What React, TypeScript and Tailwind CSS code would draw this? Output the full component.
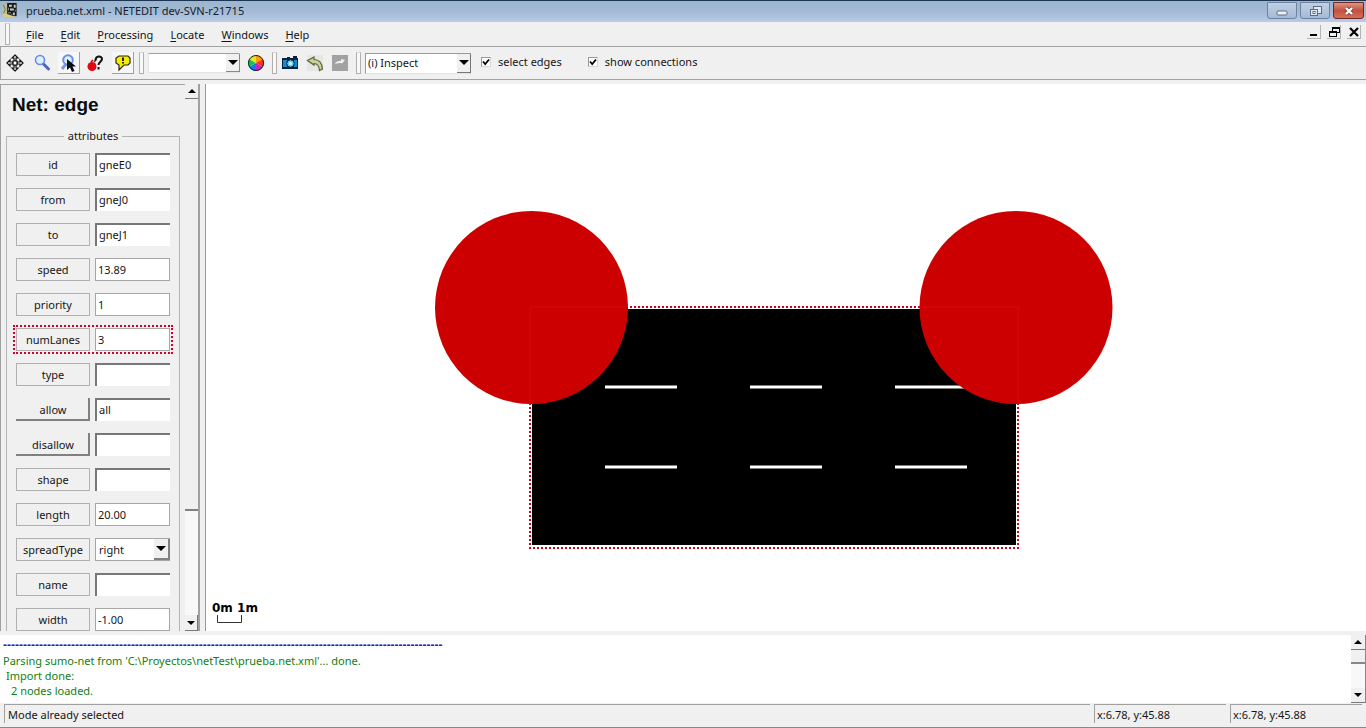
import type { ReactNode } from 'react';

const menus = ['File', 'Edit', 'Processing', 'Locate', 'Windows', 'Help'];

type FieldKind = 'sunken' | 'flat' | 'select';

interface AttributeValues {
    name: string;
    value: string;
    kind: FieldKind;
    raised?: boolean;
    highlighted?: boolean;
}

const attributes: AttributeValues[] = [
    { name: 'id', value: 'gneE0', kind: 'sunken' },
    { name: 'from', value: 'gneJ0', kind: 'sunken' },
    { name: 'to', value: 'gneJ1', kind: 'sunken' },
    { name: 'speed', value: '13.89', kind: 'flat' },
    { name: 'priority', value: '1', kind: 'flat' },
    { name: 'numLanes', value: '3', kind: 'flat', highlighted: true },
    { name: 'type', value: '', kind: 'sunken' },
    { name: 'allow', value: 'all', kind: 'sunken', raised: true },
    { name: 'disallow', value: '', kind: 'sunken', raised: true },
    { name: 'shape', value: '', kind: 'sunken' },
    { name: 'length', value: '20.00', kind: 'flat' },
    { name: 'spreadType', value: 'right', kind: 'select' },
    { name: 'name', value: '', kind: 'sunken' },
    { name: 'width', value: '-1.00', kind: 'flat' },
];

const DownArrow = () => (
    <svg viewBox="0 0 10 5" className="h-[5px] w-[10px] shrink-0">
        <path d="M0 0h10L5 5z" fill="#000" />
    </svg>
);

const SmallArrow = ({ up = false }: { up?: boolean }) => (
    <svg viewBox="0 0 8 4" className="h-1 w-2">
        <path d={up ? 'M0 4h8L4 0z' : 'M0 0h8L4 4z'} fill="#000" />
    </svg>
);

const TitleBar = () => (
    <header className="flex h-[22px] shrink-0 items-start border-t border-[#1d3550] bg-linear-to-b from-[#9cb6d0] via-[#a3bad4] to-[#b9cbe8] pr-0.5">
        <svg viewBox="0 0 18 18" className="mt-px ml-px h-[17px] w-[18px]">
            <path d="M1 2h5v12H1z" fill="#b9bda0" />
            <path d="M6 1h10v14H6z" fill="#15181c" />
            <path d="M8 3h3v2H8zM13 3h2v3h-2zM9 7h4v2H9zM7 11h3v1H7zM12 11h2v3h-2z" fill="#c9cdbf" />
            <path d="M7 6h1v3H7zM14 8h1v2h-1zM10 13h1v1h-1z" fill="#8a8f86" />
            <path d="M1 12l6 1 8 3H2z" fill="#d9cc7a" />
            <path d="M2 3l2 5-2 4" fill="none" stroke="#6f7346" />
        </svg>
        <h1 className="ml-[7px] flex-1 leading-5 text-[#14202e]">
            prueba.net.xml - NETEDIT dev-SVN-r21715
        </h1>
        <div className="mt-px flex gap-[3px]">
            <button
                aria-label="Minimize"
                className="flex h-[17px] w-[30px] items-center justify-center rounded-b-[3px] border border-[#6d83a0] bg-linear-to-b from-[#c0d0e4] to-[#a5bad6]"
            >
                <svg viewBox="0 0 12 6" className="mt-1 h-1.5 w-3">
                    <rect x="1" y="1" width="10" height="4" rx="1" fill="#eef2f7" stroke="#5d6d84" />
                </svg>
            </button>
            <button
                aria-label="Restore"
                className="flex h-[17px] w-[30px] items-center justify-center rounded-b-[3px] border border-[#6d83a0] bg-linear-to-b from-[#c0d0e4] to-[#a5bad6]"
            >
                <svg viewBox="0 0 13 12" className="h-3 w-[13px]" fill="#dfe7f1" stroke="#5d6d84">
                    <rect x="4.500" y="1.500" width="8" height="7" />
                    <rect x="1.500" y="4.500" width="7" height="6" />
                    <rect x="4" y="6.500" width="2" height="2" />
                </svg>
            </button>
            <button
                aria-label="Close"
                className="flex h-[17px] w-[31px] items-center justify-center rounded-b-[3px] border border-[#6e2a27] bg-linear-to-b from-[#dc9384] via-[#c4503e] to-[#d3705a]"
            >
                <svg viewBox="0 0 12 10" className="h-2.5 w-3">
                    <path d="M3 2l6 6M9 2l-6 6" stroke="#7b3f3a" strokeWidth="4" />
                    <path d="M3 2l6 6M9 2l-6 6" stroke="#fff" strokeWidth="2.400" />
                </svg>
            </button>
        </div>
    </header>
);

const Grip = () => (
    <span className="block h-[22px] w-[5px] border border-[#b0b0b0] border-t-[#d8d8d8] bg-[#f8f8f8]" />
);

const WindowButton = ({ label, children }: { label: string; children: ReactNode }) => (
    <button
        aria-label={label}
        className="flex h-[14px] w-[14px] items-center justify-center border-r border-b border-[#b4b4b4]"
    >
        <svg viewBox="0 0 12 12" className="h-3 w-3">
            {children}
        </svg>
    </button>
);

const MenuBar = () => (
    <nav className="flex h-[25px] shrink-0 items-center border-b border-[#a2a2a2] pr-[5px] pl-[5px]">
        <Grip />
        <ul className="ml-4 flex flex-1 gap-[17px] pt-px">
            {menus.map((menu) => (
                <li key={menu}>
                    <button>
                        <span className="underline underline-offset-2">{menu[0]}</span>
                        {menu.slice(1)}
                    </button>
                </li>
            ))}
        </ul>
        <div className="flex gap-1.5 pb-1">
            <WindowButton label="Minimize view">
                <path d="M2 8h7v2H2z" />
            </WindowButton>
            <WindowButton label="Restore view">
                <path d="M4 1h8v6H9V5H4zM5 3v2h4v1h2V3z" fillRule="evenodd" />
                <path d="M1 5h8v6H1zM2 7v3h6V7z" fillRule="evenodd" />
            </WindowButton>
            <WindowButton label="Close view">
                <path d="M2 2l8 8M10 2l-8 8" stroke="#000" strokeWidth="2.200" />
            </WindowButton>
        </div>
    </nav>
);

const ToolButton = ({
    label,
    raised = false,
    children,
}: {
    label: string;
    raised?: boolean;
    children: ReactNode;
}) => (
    <button
        aria-label={label}
        className={`flex h-[22px] w-[22px] items-center justify-center ${
            raised ? 'border-r border-b border-[#a0a0a0] bg-[#f7f7f7]' : ''
        }`}
    >
        <svg viewBox="0 0 18 18" className="h-[18px] w-[18px] shrink-0">
            {children}
        </svg>
    </button>
);

const ToolCheck = ({ label }: { label: string }) => (
    <label className="flex items-center gap-[7px] pb-0.5">
        <span className="relative flex">
            <input
                type="checkbox"
                defaultChecked
                className="h-[10px] w-[10px] appearance-none border border-[#d8d8d8] border-t-[#999] border-l-[#999] bg-white"
            />
            <svg viewBox="0 0 10 10" className="pointer-events-none absolute inset-0 h-[10px] w-[10px]">
                <path d="M2 4.500l2.200 2.500L8 2.500" fill="none" stroke="#000" strokeWidth="1.800" />
            </svg>
        </span>
        {label}
    </label>
);

const ToolBar = () => (
    <div className="flex h-[33px] shrink-0 items-center border-b border-l border-[#a2a2a2] pl-[3px]">
        <div className="flex gap-[5px]">
            <ToolButton label="Recenter view">
                <g fill="#fff" stroke="#111" strokeWidth="1.200">
                    <path d="M9 1l3 3h-2v3h-2V4H6zM9 17l3-3h-2v-3h-2v3H6zM1 9l3-3v2h3v2H4v2zM17 9l-3-3v2h-3v2h3v2z" />
                    <path d="M7 7h4v4H7z" />
                </g>
            </ToolButton>
            <ToolButton label="Zoom">
                <path d="M10.500 10l5 5" stroke="#4a66c4" strokeWidth="3" strokeLinecap="round" />
                <circle cx="7" cy="6" r="4.500" fill="#d9f0fb" stroke="#6b8be6" strokeWidth="1.600" />
            </ToolButton>
            <ToolButton label="Zoom to cursor" raised>
                <path d="M2 15l4-5" stroke="#7d98e6" strokeWidth="3" />
                <circle cx="8" cy="6" r="4.800" fill="#d9f0fb" stroke="#6b8be6" strokeWidth="2" />
                <path d="M7 5v11l3-2.500 2 4.500 2.500-1-2-4.500H16z" fill="#0a0d14" />
            </ToolButton>
            <ToolButton label="What's this">
                <circle cx="5" cy="12.500" r="4.500" fill="#e30613" />
                <path d="M4 8l2-2M7 8l2-2" stroke="#8d0c12" strokeWidth="1.500" />
                <path
                    d="M8.500 6.500c0-5 6.500-5 6.500-1.500 0 2.500-3.500 3-3.500 6M11.500 13v2.500"
                    fill="none"
                    stroke="#111"
                    strokeWidth="2"
                />
            </ToolButton>
            <ToolButton label="Tooltips" raised>
                <path
                    d="M5 2h9l2 2v5l-2 2h-4l-5 5v-5l-3-2V4z"
                    fill="#f4ed00"
                    stroke="#2a2a0a"
                    strokeWidth="1.200"
                />
                <path d="M9 3.500v3.500M9 8v1.500" stroke="#111" strokeWidth="1.800" />
            </ToolButton>
        </div>
        <span className="ml-[5px]">
            <Grip />
        </span>
        <label className="relative ml-1 flex">
            <select
                aria-label="Color scheme"
                className="h-5 w-[92px] appearance-none border border-[#e3e3e3] border-t-[#a0a0a0] bg-white px-0.5"
            >
                <option></option>
            </select>
            <span className="pointer-events-none absolute inset-y-px right-0 flex w-[14px] items-center justify-center border-r border-b border-[#888] bg-[#f0f0f0]">
                <DownArrow />
            </span>
        </label>
        <span className="ml-[5px]">
            <ToolButton label="Edit coloring">
                <path d="M9 9V1a8 8 0 0 1 7 4z" fill="#ff9d00" />
                <path d="M9 9l7-4a8 8 0 0 1 0 8z" fill="#fb3510" />
                <path d="M9 9l7 4a8 8 0 0 1-7 4z" fill="#d01ec3" />
                <path d="M9 9v8a8 8 0 0 1-7-4z" fill="#1677e8" />
                <path d="M9 9l-7 4a8 8 0 0 1 0-8z" fill="#16c34a" />
                <path d="M9 9L2 5a8 8 0 0 1 7-4z" fill="#e9e51c" />
                <circle cx="9" cy="9" r="7.500" fill="none" stroke="#222" />
            </ToolButton>
        </span>
        <span className="ml-[5px]">
            <Grip />
        </span>
        <div className="ml-0.5 flex gap-[3px]">
            <ToolButton label="Snapshot">
                <path d="M1 4h5V3h3v1h3V2h4v2h1v11H1z" fill="#08213d" />
                <path d="M2 6h4v7H2zM13 6h3v7h-3z" fill="#1689cf" />
                <circle cx="9.500" cy="9.500" r="3.800" fill="#5ed0f7" stroke="#06182c" />
                <circle cx="9.500" cy="9.500" r="1.500" fill="#e4faff" />
            </ToolButton>
            <ToolButton label="Undo">
                <path d="M1 1h16v16H1z" fill="#e6e6e2" />
                <path
                    d="M1.500 6.500L8 3v2.500c5 0 8 3.500 8.500 9.500l-3 1.500C13 12 11 9.500 8 9.500V11z"
                    fill="#c9d199"
                    stroke="#5a6040"
                    strokeWidth="1.200"
                />
            </ToolButton>
            <ToolButton label="Redo">
                <path d="M1 1h16v16H1z" fill="#a2a2a2" />
                <path d="M4 10c1-3 4-3 6-3V5l4 1-3 3.500-1-.5c-2 0-4 0-6 1z" fill="#f2f2f2" />
            </ToolButton>
        </div>
        <span className="ml-[5px]">
            <Grip />
        </span>
        <label className="relative ml-1 flex">
            <select
                aria-label="Edit mode"
                className="h-[21px] w-[106px] appearance-none border border-[#999] border-b-[#e3e3e3] bg-white px-0.5"
            >
                <option>(i) Inspect</option>
            </select>
            <span className="pointer-events-none absolute inset-y-px right-0 flex w-[14px] items-center justify-center border-r border-b border-[#777] bg-[#f0f0f0]">
                <DownArrow />
            </span>
        </label>
        <div className="ml-2.5 flex gap-[26px]">
            <ToolCheck label="select edges" />
            <ToolCheck label="show connections" />
        </div>
    </div>
);

const fieldStyles: Record<FieldKind, string> = {
    sunken: 'border-t-2 border-l-2 border-[#777] pb-0.5',
    flat: 'border border-[#a6a6a6]',
    select: 'border border-[#a6a6a6] appearance-none',
};

const AttributeRow = ({ name, value, kind, raised, highlighted }: AttributeValues) => (
    <div
        className={`flex h-[29px] items-center gap-[5px] border-2 border-dotted px-px ${
            highlighted ? 'border-[#d4002a]' : 'border-transparent'
        }`}
    >
        <button
            className={`h-[23px] w-[74px] shrink-0 ${
                raised
                    ? 'border-r-2 border-b-2 border-[#808080] pt-0.5 pl-0.5'
                    : 'border border-[#b0b0b0]'
            }`}
        >
            {name}
        </button>
        {kind === 'select' ? (
            <span className="relative flex min-w-0 flex-1">
                <select
                    aria-label={name}
                    className={`h-[23px] w-full bg-white px-[3px] ${fieldStyles[kind]}`}
                >
                    <option>{value}</option>
                </select>
                <span className="pointer-events-none absolute inset-y-px right-0 flex w-4 items-center justify-center border-r-2 border-b-2 border-[#808080] bg-[#f0f0f0]">
                    <DownArrow />
                </span>
            </span>
        ) : (
            <input
                aria-label={name}
                defaultValue={value}
                className={`h-[23px] min-w-0 flex-1 bg-white px-0.5 ${fieldStyles[kind]}`}
            />
        )}
    </div>
);

const Inspector = () => (
    <aside className="flex w-[206px] shrink-0 border-r border-[#9a9a9a]">
        <div className="min-w-0 flex-1 overflow-hidden border-t border-l border-[#a0a0a0] pl-[5px]">
            <h2 className="mt-2 pl-1.5 font-['Liberation_Sans',sans-serif] text-[19px] leading-6 font-bold text-[#0c0c0c]">
                Net: edge
            </h2>
            <fieldset className="mt-[11px] mr-[5px] min-w-0 border border-[#b4b4b4] px-1.5">
                <legend className="mx-auto px-1 leading-4">attributes</legend>
                <div className="flex flex-col gap-1.5 pt-1.5">
                    {attributes.map((attribute) => (
                        <AttributeRow key={attribute.name} {...attribute} />
                    ))}
                </div>
            </fieldset>
        </div>
        <div className="flex w-[15px] flex-col border-r-2 border-[#a0a0a0] bg-[#f8f8f8]">
            <button
                aria-label="Scroll up"
                className="flex h-[15px] items-center justify-center border-b border-[#777] bg-[#f0f0f0]"
            >
                <SmallArrow up />
            </button>
            <div className="h-[412px] border-b-2 border-[#808080] bg-[#f0f0f0]" />
            <button
                aria-label="Scroll down"
                className="mt-auto flex h-4 items-center justify-center border-r border-b border-[#777] bg-[#f0f0f0]"
            >
                <SmallArrow />
            </button>
        </div>
        <div className="w-[5px]" />
    </aside>
);

const dashes = [
    [605, 387],
    [750, 387],
    [895, 387],
    [605, 467],
    [750, 467],
    [895, 467],
];

const NetworkView = () => (
    <main className="min-w-0 flex-1 overflow-hidden bg-white">
        <svg viewBox="206 84 1160 547" className="h-full w-full" preserveAspectRatio="xMinYMin meet">
            <rect x="532" y="309" width="484" height="236" fill="#000" />
            <rect
                x="530"
                y="307"
                width="488"
                height="241"
                fill="none"
                stroke="#cf0016"
                strokeWidth="2"
                strokeDasharray="2 2"
            />
            {dashes.map(([x, y]) => (
                <path key={`${x}-${y}`} d={`M${x} ${y}h72`} stroke="#fff" strokeWidth="3" />
            ))}
            <circle cx="531.500" cy="307.500" r="96.500" fill="#cc0000" />
            <circle cx="1016" cy="307.500" r="96.500" fill="#cc0000" />
            <path d="M530 404V307h98M920 307h98v97" fill="none" stroke="#d30a0a" />
            <text
                x="212"
                y="612"
                fontSize="12"
                fontWeight="bold"
                className="font-['DejaVu_Sans',sans-serif]"
            >
                0m 1m
            </text>
            <path d="M217.500 615v7.500h24V615" fill="none" stroke="#333" />
        </svg>
    </main>
);

const MessageLog = () => (
    <section className="flex h-[72px] shrink-0 border-t-4 border-[#f0f0f0] bg-white">
        <div className="min-w-0 flex-1 overflow-hidden pt-[3px] pl-[3px] leading-[15px] text-[#128012]">
            <p className="font-['Liberation_Sans',sans-serif] text-[12px] font-bold text-[#2a1fb0]">
                {'-'.repeat(110)}
            </p>
            <p>Parsing sumo-net from 'C:\Proyectos\netTest\prueba.net.xml'... done.</p>
            <p className="pl-[3px]">Import done:</p>
            <p className="pl-2">2 nodes loaded.</p>
        </div>
        <div className="flex w-[15px] flex-col border-r border-[#888] bg-[#f8f8f8]">
            <button
                aria-label="Scroll log up"
                className="flex h-[15px] items-center justify-center border-b border-[#777] bg-[#f0f0f0]"
            >
                <SmallArrow up />
            </button>
            <div className="h-[14px] border-b-2 border-[#888] bg-[#f0f0f0]" />
            <button
                aria-label="Scroll log down"
                className="mt-auto flex h-[15px] items-center justify-center border-b border-[#777] bg-[#f0f0f0]"
            >
                <SmallArrow />
            </button>
        </div>
    </section>
);

const StatusBar = () => (
    <footer className="flex h-[25px] shrink-0 gap-1 border-b border-[#888] pt-px pr-1 pb-1 pl-1 leading-5">
        <p className="flex-1 border-t border-l border-[#a0a0a0] pl-[3px]">Mode already selected</p>
        <p className="w-[132px] border-t border-l border-[#a0a0a0] pl-0.5">x:6.78, y:45.88</p>
        <p className="w-[132px] border-t border-l border-[#a0a0a0] pl-0.5">x:6.78, y:45.88</p>
    </footer>
);

export default function App() {
    return (
        <div className="flex h-screen flex-col bg-[#f0f0f0] font-['Noto_Sans','Open_Sans',sans-serif] text-[11px] leading-4 text-[#151515]">
            <TitleBar />
            <MenuBar />
            <ToolBar />
            <div className="flex min-h-0 flex-1 pt-1">
                <Inspector />
                <NetworkView />
            </div>
            <MessageLog />
            <StatusBar />
        </div>
    );
}
